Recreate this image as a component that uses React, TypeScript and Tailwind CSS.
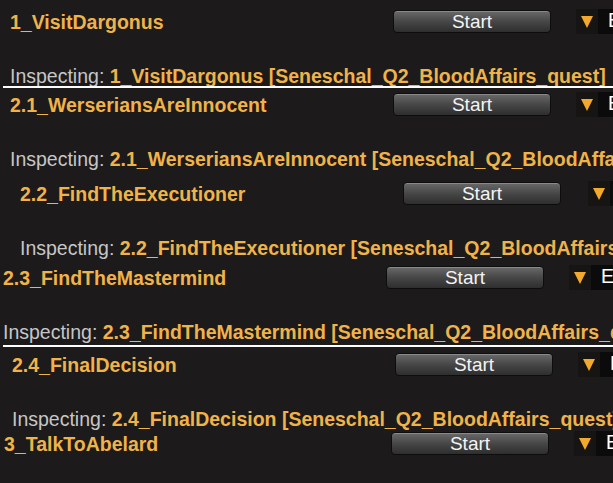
import React from "react";

type Panel = {
  title: string;
  wrap: string;
  titleW: string;
  gap: string;
  sepAfter?: boolean;
};

const panels: Panel[] = [
  { title: "1_VisitDargonus", wrap: "h-[86px] pl-[10px] pt-[10px]", titleW: "w-[383px]", gap: "ml-[25px]", sepAfter: true },
  { title: "2.1_WerseriansAreInnocent", wrap: "h-[84px] pl-[10px] pt-[5px]", titleW: "w-[383px]", gap: "ml-[25px]" },
  { title: "2.2_FindTheExecutioner", wrap: "h-[85px] pl-[20px] pt-[10px]", titleW: "w-[383px]", gap: "ml-[27px]" },
  { title: "2.3_FindTheMastermind", wrap: "h-[88px] pl-[3px] pt-[9px]", titleW: "w-[383px]", gap: "ml-[25px]", sepAfter: true },
  { title: "2.4_FinalDecision", wrap: "h-[81px] pl-[12px] pt-[6px]", titleW: "w-[383px]", gap: "ml-[25px]" },
  { title: "3_TalkToAbelard", wrap: "h-[55px] pl-[4px] pt-[4px]", titleW: "w-[387px]", gap: "ml-[25px]" },
];

function Dropdown() {
  return (
    <div className="flex h-[25px] shrink-0 items-stretch overflow-hidden rounded-l-[3px] bg-[#0c0b0b] -mt-[1px]">
      <div className="flex w-[22px] items-center justify-center bg-[#171513]">
        <svg width="12" height="13" viewBox="0 0 12 13">
          <polygon points="0,1 12,1 6,13" fill="#f3a92c" />
        </svg>
      </div>
      <div className="flex items-center pl-[10px] pr-[40px] text-[19.5px] leading-none text-white">
        Enabled
      </div>
    </div>
  );
}

function StartButton() {
  return (
    <div className="flex h-[23px] w-[158px] shrink-0 items-center justify-center rounded-[4px] border border-[#0d0d0d] bg-linear-to-b from-[#6a6a6a] via-[#474747] to-[#2e2e2e] text-[19px] leading-none text-[#f4f4f4] shadow-[inset_0_1px_0_#8a8a8a]">
      Start
    </div>
  );
}

export default function App() {
  return (
    <div
      className="h-[483px] w-[613px] overflow-hidden bg-[#1c1a1b]"
      style={{ fontFamily: '"Liberation Sans", Arial, sans-serif' }}
    >
      {panels.map((p) => (
        <React.Fragment key={p.title}>
          <div className={`flex flex-col whitespace-nowrap ${p.wrap}`}>
            <div className="flex h-[23px] items-center">
              <div className={`shrink-0 pt-[3px] text-[19.5px] font-bold leading-none text-[#f0b34a] ${p.titleW}`}>
                {p.title}
              </div>
              <StartButton />
              <div className={p.gap}>
                <Dropdown />
              </div>
            </div>
            <div className="mt-[32px] h-[23px] text-[19.5px] leading-[23px]">
              <span className="text-[#c6c6c6]">Inspecting: </span>
              <span className="font-bold text-[#f0b34a]">
                {p.title} [Seneschal_Q2_BloodAffairs_quest]
              </span>
            </div>
          </div>
          {p.sepAfter && <div className="relative ml-[3px] h-[2px] bg-white" />}
        </React.Fragment>
      ))}
    </div>
  );
}
